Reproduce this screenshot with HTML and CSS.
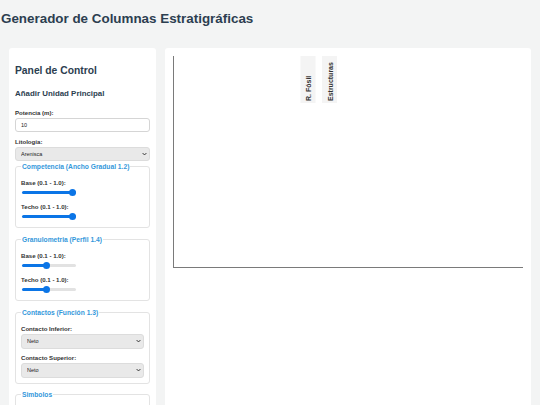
FILE: index.html
```html
<!DOCTYPE html>
<html lang="es">
<head>
<meta charset="utf-8">
<title>Generador de Columnas Estratigráficas</title>
<link rel="stylesheet" href="styles.css">
</head>
<body>
<h1 class="title">Generador de Columnas Estratigráficas</h1>
<div class="layout">
  <aside class="panel">
    <h2 class="panel-title">Panel de Control</h2>
    <h3 class="section-title">Añadir Unidad Principal</h3>
    <label class="lbl">Potencia (m):</label>
    <input class="txt" type="text" value="10">
    <label class="lbl">Litología:</label>
    <div class="sel-wrap">
      <select class="sel"><option>Arenisca</option></select>
      <svg class="chev" viewBox="0 0 8 5" width="5" height="4"><path d="M1 1 L4 4 L7 1" fill="none" stroke="#333" stroke-width="1.6"/></svg>
    </div>

    <fieldset class="group">
      <legend>Competencia (Ancho Gradual 1.2)</legend>
      <label class="lbl sub first">Base (0.1 - 1.0):</label>
      <input class="range" type="range" min="0.1" max="1" step="0.1" value="1" style="--fill:100%">
      <label class="lbl sub">Techo (0.1 - 1.0):</label>
      <input class="range" type="range" min="0.1" max="1" step="0.1" value="1" style="--fill:100%">
    </fieldset>

    <fieldset class="group">
      <legend>Granulometria (Perfil 1.4)</legend>
      <label class="lbl sub first">Base (0.1 - 1.0):</label>
      <input class="range" type="range" min="0.1" max="1" step="0.1" value="0.5" style="--fill:45%">
      <label class="lbl sub">Techo (0.1 - 1.0):</label>
      <input class="range" type="range" min="0.1" max="1" step="0.1" value="0.5" style="--fill:45%">
    </fieldset>

    <fieldset class="group contacts">
      <legend>Contactos (Función 1.3)</legend>
      <label class="lbl sub first">Contacto Inferior:</label>
      <div class="sel-wrap">
        <select class="sel tall"><option>Neto</option></select>
        <svg class="chev" viewBox="0 0 8 5" width="5" height="4"><path d="M1 1 L4 4 L7 1" fill="none" stroke="#333" stroke-width="1.6"/></svg>
      </div>
      <label class="lbl sub">Contacto Superior:</label>
      <div class="sel-wrap">
        <select class="sel tall"><option>Neto</option></select>
        <svg class="chev" viewBox="0 0 8 5" width="5" height="4"><path d="M1 1 L4 4 L7 1" fill="none" stroke="#333" stroke-width="1.6"/></svg>
      </div>
    </fieldset>

    <fieldset class="group symbols">
      <legend>Simbolos</legend>
    </fieldset>
  </aside>

  <main class="canvas">
    <svg class="chart" width="366" height="230" viewBox="0 0 366 230">
      <rect x="135.5" y="8" width="15" height="47" fill="#f4f4f4"/>
      <text class="colhead" transform="translate(146,53) rotate(-90)">R. Fósil</text>
      <rect x="157" y="8" width="15" height="47" fill="#f4f4f4"/>
      <text class="colhead" transform="translate(167.5,53) rotate(-90)">Estructuras</text>
      <line x1="8.5" y1="8" x2="8.5" y2="219.5" stroke="#7a7a7a" stroke-width="1"/>
      <line x1="8" y1="219.5" x2="358" y2="219.5" stroke="#7a7a7a" stroke-width="1"/>
    </svg>
  </main>
</div>
</body>
</html>
```

FILE: styles.css
```css
* { box-sizing: border-box; }
html, body { margin: 0; padding: 0; }
body {
  background: #f3f4f4;
  font-family: "Liberation Sans", Arial, sans-serif;
  color: #333;
  height: 405px;
  overflow: hidden;
}
.title {
  margin: 0;
  padding: 11px 0 0 1px;
  height: 48px;
  font-size: 13.4px;
  font-weight: bold;
  color: #2c3e50;
  line-height: 16px;
}
.layout {
  display: flex;
  gap: 9px;
  padding: 0 9px;
  align-items: flex-start;
}
.panel {
  width: 147px;
  flex: none;
  background: #fff;
  border-radius: 3px;
  padding: 16px 6px 20px 6px;
  min-height: 400px;
}
.panel-title {
  margin: 0 0 10px;
  font-size: 10.3px;
  line-height: 14px;
  color: #2c3e50;
}
.section-title {
  margin: 0 0 10px;
  font-size: 7.9px;
  line-height: 11px;
  color: #2c3e50;
}
.lbl {
  display: block;
  font-size: 6.1px;
  font-weight: bold;
  line-height: 8px;
  margin-bottom: 1px;
  color: #333;
}
.txt {
  display: block;
  width: 100%;
  height: 14px;
  border: 1px solid #d5d5d5;
  border-radius: 3px;
  padding: 0 5px;
  font-family: inherit;
  font-size: 5.5px;
  color: #222;
  margin-bottom: 6px;
  background: #fff;
}
.sel-wrap {
  position: relative;
  margin-bottom: 1px;
}
.sel {
  display: block;
  width: 100%;
  height: 13.5px;
  appearance: none;
  -webkit-appearance: none;
  background: #e9e9e9;
  border: 1px solid #dcdcdc;
  border-radius: 3px;
  padding: 0 5px;
  font-family: inherit;
  font-size: 5.5px;
  color: #222;
}
.sel.tall { height: 15px; }
.chev {
  position: absolute;
  right: 3px;
  top: 5px;
}
.sel.tall + .chev { top: 5.5px; }
.group {
  margin: 0 0 6.5px;
  border: 1px solid #e3e3e3;
  border-radius: 3px;
  padding: 8px 5px 9px;
  min-width: 0;
}
.group legend {
  padding: 0 1px;
  font-size: 6.7px;
  font-weight: bold;
  color: #3498db;
  line-height: 9px;
  white-space: nowrap;
}
.lbl.sub {
  margin: 9.5px 0 0;
}
.lbl.sub.first { margin-top: 0; }
.range {
  -webkit-appearance: none;
  appearance: none;
  display: block;
  width: 54px;
  height: 3px;
  margin: 4px 0 0 1px;
  padding: 0;
  border-radius: 2px;
  background: linear-gradient(to right, #0b75e6 var(--fill), #e2e2e2 var(--fill));
  outline: none;
}
.range::-webkit-slider-thumb {
  -webkit-appearance: none;
  width: 7px;
  height: 7px;
  border-radius: 50%;
  background: #0b75e6;
  border: none;
}
.contacts { padding-bottom: 5px; }
.contacts .lbl.sub { margin-top: 5px; margin-bottom: 1px; }
.contacts .lbl.sub.first { margin-top: 0; }
.contacts .sel-wrap { margin: 0; }
.symbols { min-height: 40px; }
.canvas {
  flex: 1;
  background: #fff;
  border-radius: 3px;
  min-height: 400px;
}
.chart { display: block; }
.colhead {
  font-family: "Liberation Sans", Arial, sans-serif;
  font-size: 7px;
  font-weight: bold;
  fill: #333;
}
```
